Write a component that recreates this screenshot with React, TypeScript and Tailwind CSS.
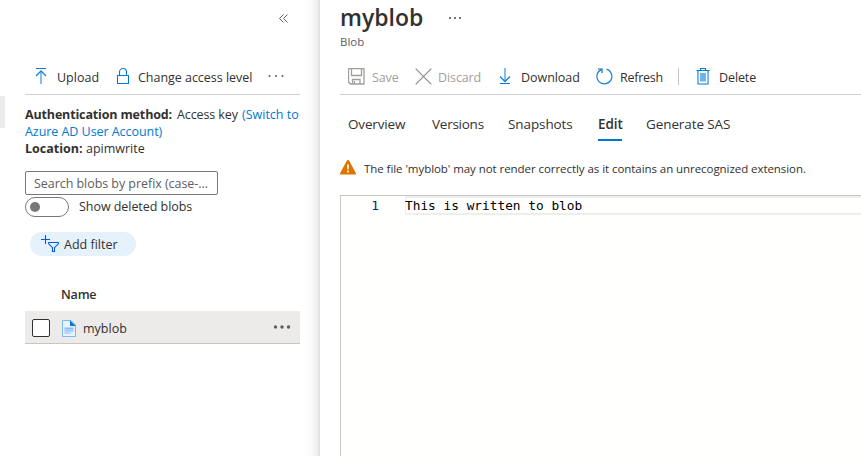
import React from "react";

function UploadIcon() {
  return (
    <svg width="12" height="18" viewBox="0 0 12 18" fill="none">
      <path d="M1 1.500h10" stroke="#0078d4" />
      <path d="M6 5v12" stroke="#5ea9e4" strokeWidth="1.500" />
      <path d="M1 9l5-5 5 5" stroke="#1683d8" strokeWidth="1.300" />
    </svg>
  );
}

function LockIcon() {
  return (
    <svg width="14" height="18" viewBox="0 0 14 18" fill="none" stroke="#0078d4" strokeWidth="1.100">
      <path d="M1.500 8.500h11v8h-11z" />
      <path d="M3.500 8.500V5a3.500 3.500 0 0 1 7 0v3.500" />
    </svg>
  );
}

function SaveIcon() {
  return (
    <svg width="17" height="17" viewBox="0 0 17 17" fill="none" stroke="#a19f9d" strokeWidth="1.300">
      <path d="M.5.5h15.500v15.500H2.500l-2-2z" />
      <path d="M3.500.5v7h10v-7M4.500 16v-4.500h7.500V16M6.500 13v3" />
    </svg>
  );
}

function DiscardIcon() {
  return (
    <svg width="17" height="17" viewBox="0 0 17 17" fill="none" stroke="#8f8d8b" strokeWidth="1.200">
      <path d="M.7.7l15.600 15.600M16.300.7L.7 16.300" />
    </svg>
  );
}

function DownloadIcon() {
  return (
    <svg width="12" height="17" viewBox="0 0 12 17" fill="none">
      <path d="M6 0v13" stroke="#5ea9e4" strokeWidth="1.500" />
      <path d="M1 8.500l5 5 5-5" stroke="#1683d8" strokeWidth="1.400" />
      <path d="M1 15.500h10" stroke="#0078d4" />
    </svg>
  );
}

function RefreshIcon() {
  return (
    <svg width="17" height="17" viewBox="0 0 17 17" fill="none" stroke="#1683d8" strokeWidth="1.200">
      <path d="M10.500 1.200a7.500 7.500 0 1 1-5.300.400" />
      <path d="M2 1h4v4" stroke="#0065b3" />
    </svg>
  );
}

function DeleteIcon() {
  return (
    <svg width="14" height="17" viewBox="0 0 14 17" fill="none">
      <path d="M4 5h6v8.500H4z" fill="#6eb3ea" />
      <path d="M4.500 2.500v-2h5v2M.5 2.500h13M2 2.500v13.500h10V2.500" stroke="#0078d4" strokeWidth="1.100" />
      <path d="M2.500 3.500v12M11.500 3.500v12" stroke="#83bdec" />
    </svg>
  );
}

function FilterIcon() {
  return (
    <svg width="18" height="17" viewBox="0 0 18 17" fill="none" stroke="#015cda" strokeWidth="1.100">
      <path d="M4.500 0v9M0 4.500h9" />
      <path d="M7.700 7.500h9.600v1.300l-3.800 3.900v3.800h-2v-3.800L7.700 8.800z" />
    </svg>
  );
}

function FileIcon() {
  return (
    <svg width="14" height="17" viewBox="0 0 14 17">
      <path d="M.5.500h8.500l4.500 4.500v11.500H.5z" fill="#e9f3fd" stroke="#7db7f0" />
      <path d="M8 .2l5.800 5.800H9c-.6 0-1-.4-1-1z" fill="#0078d4" />
      <path d="M2.500 7.500h9v2h-9zM2.500 10.300h9v1.200h-9zM2.500 12.500h6v1h-6z" fill="#83b9f9" />
    </svg>
  );
}

function WarningIcon() {
  return (
    <svg width="16" height="15" viewBox="0 0 16 15">
      <path d="M8 0c.6 0 1 .3 1.200.7l6.600 12.200c.4.900 0 1.700-1 1.700H1.200c-1 0-1.400-.8-1-1.700L6.800.7C7 .3 7.400 0 8 0z" fill="#db7500" />
      <path d="M7 4.500h2l-.4 5H7.400z" fill="#fff" />
      <circle cx="8" cy="11.500" r="1" fill="#fff" />
    </svg>
  );
}

function Dots({ className, r, gap }: { className: string; r: number; gap: number }) {
  return (
    <svg className={className} width="18" height="6" viewBox="0 0 18 6" fill="currentColor">
      <circle cx={9 - gap} cy="3" r={r} />
      <circle cx="9" cy="3" r={r} />
      <circle cx={9 + gap} cy="3" r={r} />
    </svg>
  );
}

function BlobList() {
  return (
    <aside className="flex w-[320px] shrink-0 bg-[linear-gradient(to_right,#fff_303px,#fbfbfb_310px,#f3f3f3_316px,#e0e0e0_320px)]">
      <div className="mt-[96px] h-8 w-[5px] shrink-0 bg-[#edebe9]" />
      <div className="ml-5 flex w-[275px] flex-col">
        <div className="flex h-[60px] justify-end pt-[14px] pr-[12px]">
          <svg width="9" height="9" viewBox="0 0 9 9" fill="none" stroke="#605e5c">
            <path d="M4.500.5l-4 4 4 4M8.500.5l-4 4 4 4" />
          </svg>
        </div>
        <div className="flex h-[35px] items-center border-b border-[#d2d0ce] pb-[2px] pl-[10px]">
          <UploadIcon />
          <span className="ml-[10px] w-[59px] pt-1">Upload</span>
          <LockIcon />
          <span className="ml-[8px] w-[129px] pt-1 tracking-[-0.03px]">Change access level</span>
          <Dots className="text-[#605e5c]" r={1} gap={6.500} />
        </div>
        <div className="mt-[11px] text-[12.500px] leading-[17px]">
          <div className="flex">
            <b className="w-[152px] font-bold tracking-[-0.15px]">Authentication method:</b>
            <span className="w-[65px] tracking-[-0.1px]">Access key</span>
            <a className="text-[#0078d4]">(Switch to</a>
          </div>
          <a className="block tracking-[-0.05px] text-[#0078d4]">Azure AD User Account)</a>
          <div className="flex">
            <b className="w-[61px] font-bold">Location:</b>
            <span>apimwrite</span>
          </div>
        </div>
        <div className="mt-[14px] flex h-6 w-[193px] items-center rounded-[2px] border border-[#7a7876] pt-px pl-2 tracking-[-0.05px] text-[#605e5c]">Search blobs by prefix (case-...</div>
        <div className="mt-[2px] flex h-5 items-center">
          <div className="flex h-5 w-11 items-center rounded-full border border-[#7a7876] pl-1">
            <div className="size-[10px] rounded-full bg-[#7a7876]" />
          </div>
          <span className="ml-[10px] tracking-[-0.05px]">Show deleted blobs</span>
        </div>
        <div className="mt-[15px] ml-[5px] flex h-6 w-[106px] items-center rounded-full bg-[#e5f1fb] pl-[11px]">
          <div className="pb-px"><FilterIcon /></div>
          <span className="ml-[5px] pt-px">Add filter</span>
        </div>
        <div className="mt-[29px] flex h-[26px] items-start pl-9 leading-[19px] font-semibold tracking-[-0.2px]">Name</div>
        <div className="flex h-[33px] items-center border-b border-[#c8c6c4] bg-[#edebe9] pl-[7px]">
          <div className="mt-[2px] h-[18px] w-[18px] rounded-[2px] border border-[#323130] bg-white" />
          <div className="mt-[2px] ml-3"><FileIcon /></div>
          <span className="ml-[7px] grow pt-[3px]">myblob</span>
          <Dots className="mr-[9px] mb-px text-[#605e5c]" r={1.700} gap={6.500} />
        </div>
      </div>
    </aside>
  );
}

function BlobEditor() {
  return (
    <main className="flex min-w-0 grow flex-col bg-white pl-5">
      <div className="flex h-[35px] items-center">
        <h1 className="w-[106px] text-[23px] leading-[35px] font-semibold">myblob</h1>
        <Dots className="text-[#323130]" r={0.9} gap={5} />
      </div>
      <div className="h-[25px] text-[11.500px] leading-[14px] text-[#605e5c]">Blob</div>
      <div className="flex h-[35px] shrink-0 items-center border-b border-[#d2d0ce] pb-[2px] pl-[8px]">
        <SaveIcon />
        <span className="ml-[7px] w-[43px] pt-1 tracking-[-0.1px] text-[#a19f9d]">Save</span>
        <DiscardIcon />
        <span className="ml-[6px] w-[61px] pt-1 tracking-[-0.1px] text-[#a19f9d]">Discard</span>
        <DownloadIcon />
        <span className="ml-[10px] w-[75px] pt-1 tracking-[-0.05px]">Download</span>
        <RefreshIcon />
        <span className="ml-[7px] w-[58px] pt-1 tracking-[-0.25px]">Refresh</span>
        <div className="h-[17px] w-px bg-[#c8c6c4]" />
        <div className="ml-[17px]"><DeleteIcon /></div>
        <span className="ml-[9px] pt-1 tracking-[-0.1px]">Delete</span>
      </div>
      <nav className="mt-[14px] flex h-[32px] shrink-0 pl-2 text-[13.500px] leading-[30px]">
        <span className="w-[84px] tracking-[-0.15px]">Overview</span>
        <span className="w-[76px] tracking-[-0.25px]">Versions</span>
        <span className="w-[90px] tracking-[-0.1px]">Snapshots</span>
        <span className="mr-6 w-6 border-b-2 border-[#0078d4] font-semibold tracking-[-0.1px] whitespace-nowrap">Edit</span>
        <span className="tracking-[-0.1px]">Generate SAS</span>
      </nav>
      <div className="mt-[19px] flex h-[15px] shrink-0 items-center text-[11.500px]">
        <WarningIcon />
        <span className="ml-2 pt-[2px] tracking-[-0.060px]">The file 'myblob' may not render correctly as it contains an unrecognized extension.</span>
      </div>
      <div className="mt-5 flex grow border-t border-l border-[#c8c6c4] bg-[#fffffe] font-['DejaVu_Sans_Mono',monospace] text-[12.800px] text-black">
        <div className="w-[64px] pr-[26px] text-right leading-[19px] text-[#0b216f]">1</div>
        <div className="h-[19px] grow border-y-2 border-l border-[#eee] leading-[15px] whitespace-nowrap">
          <span className="-ml-px">This is written to blob</span>
        </div>
      </div>
    </main>
  );
}

export default function App() {
  return (
    <div className="flex h-[456px] w-[861px] overflow-hidden bg-white font-['Open_Sans','Noto_Sans',sans-serif] text-[12.500px] leading-[18px] whitespace-nowrap text-[#323130]">
      <BlobList />
      <BlobEditor />
    </div>
  );
}
